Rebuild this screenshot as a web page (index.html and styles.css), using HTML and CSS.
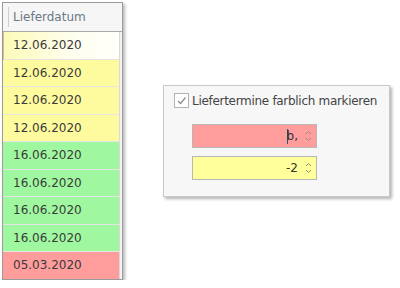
FILE: index.html
```
<!DOCTYPE html>
<html lang="de">
<head>
  <meta charset="UTF-8">
  <title>Liefertermine</title>
  <link rel="stylesheet" href="styles.css">
</head>
<body>
  <div class="page">
    <div class="grid">
      <div class="grid-head"><span class="head-cell">Lieferdatum</span></div>
      <div class="row row-focus">12.06.2020</div>
      <div class="row row-yellow">12.06.2020</div>
      <div class="row row-yellow">12.06.2020</div>
      <div class="row row-yellow">12.06.2020</div>
      <div class="row row-green">16.06.2020</div>
      <div class="row row-green">16.06.2020</div>
      <div class="row row-green">16.06.2020</div>
      <div class="row row-green">16.06.2020</div>
      <div class="row row-red">05.03.2020</div>
    </div>

    <div class="panel">
      <label class="check">
        <span class="check-box">
          <svg width="13" height="13" viewBox="0 0 13 13"><path d="M3 7 L5.5 9.5 L10.5 3.5" fill="none" stroke="#8a8a8a" stroke-width="1.2"/></svg>
        </span>
        Liefertermine farblich markieren
      </label>
      <div class="spin spin-red">
        <span class="spin-value"><span class="caret"></span>b,</span>
        <svg class="spin-arrows" width="7" height="14" viewBox="0 0 7 14"><path d="M1 5 L3.5 2.5 L6 5 M1 9 L3.5 11.5 L6 9" fill="none" stroke="#8c8c8c" stroke-width="1"/></svg>
      </div>
      <div class="spin spin-yellow">
        <span class="spin-value">-2</span>
        <svg class="spin-arrows" width="7" height="14" viewBox="0 0 7 14"><path d="M1 5 L3.5 2.5 L6 5 M1 9 L3.5 11.5 L6 9" fill="none" stroke="#8c8c8c" stroke-width="1"/></svg>
      </div>
    </div>
  </div>
</body>
</html>
```

FILE: styles.css
```
:root {
  --yellow: #fdfb9e;
  --green: #9ff89f;
  --red: #ff9d9d;
  --text: #3a3a3a;
  --grid-border: #9b9b9b;
}
body {
  margin: 0;
  background: #fff;
  font-family: 'DejaVu Sans', sans-serif;
  font-size: 12px;
  color: var(--text);
}
.page {
  display: flex;
  align-items: flex-start;
  padding: 2px 0 0 2px;
}
.grid {
  width: 119px;
  border: 1px solid var(--grid-border);
  background: #f3f3f3;
  box-shadow: 2px 2px 3px rgba(0, 0, 0, 0.28);
}
.grid-head {
  height: 28px;
  display: flex;
  align-items: center;
  border-bottom: 1px solid #a9a9a9;
  background: #f6f6f6;
}
.head-cell {
  border-left: 1px solid #cfcfcf;
  margin-left: 5px;
  padding-left: 4px;
  line-height: 20px;
  color: #6b7986;
}
.row {
  height: 26.5px;
  line-height: 26.5px;
  padding-left: 10px;
  margin-right: 2px;
  border-bottom: 1px solid #e4e4e4;
  border-right: 1px solid #d9d9d9;
}
.row:last-child {
  border-bottom: none;
}
.row-focus {
  background: linear-gradient(to right, #fdfbb8, #fefef0 60%, #fffffa);
  border-left: 1px solid #e2b685;
  padding-left: 9px;
}
.row-yellow { background: var(--yellow); }
.row-green { background: var(--green); }
.row-red { background: var(--red); }

.panel {
  margin: 83px 0 0 40px;
  width: 227px;
  height: 112px;
  box-sizing: border-box;
  border: 1px solid #c9c9c9;
  background: #f7f7f7;
  box-shadow: 2px 2px 3px rgba(0, 0, 0, 0.3);
  padding: 7px 0 0 10px;
}
.check {
  display: flex;
  align-items: center;
  gap: 3px;
  font-size: 12px;
  color: #444;
  letter-spacing: -0.3px;
}
.check-box {
  width: 13px;
  height: 13px;
  border: 1px solid #b3b3b3;
  background: #fff;
  display: flex;
}
.spin {
  width: 119px;
  height: 22px;
  margin: 16px 0 0 18px;
  border: 1px solid #b7b7b7;
  display: flex;
  align-items: center;
  justify-content: flex-end;
  gap: 7px;
  padding-right: 4px;
  box-sizing: content-box;
  color: #333;
}
.spin + .spin {
  margin-top: 8px;
}
.spin-red { background: var(--red); }
.spin-yellow { background: #ffff9c; }
.spin-value {
  display: flex;
  align-items: center;
}
.caret {
  width: 1px;
  height: 15px;
  background: #2a5a7a;
  margin-right: -1px;
}
.spin-arrows {
  display: block;
}
```
